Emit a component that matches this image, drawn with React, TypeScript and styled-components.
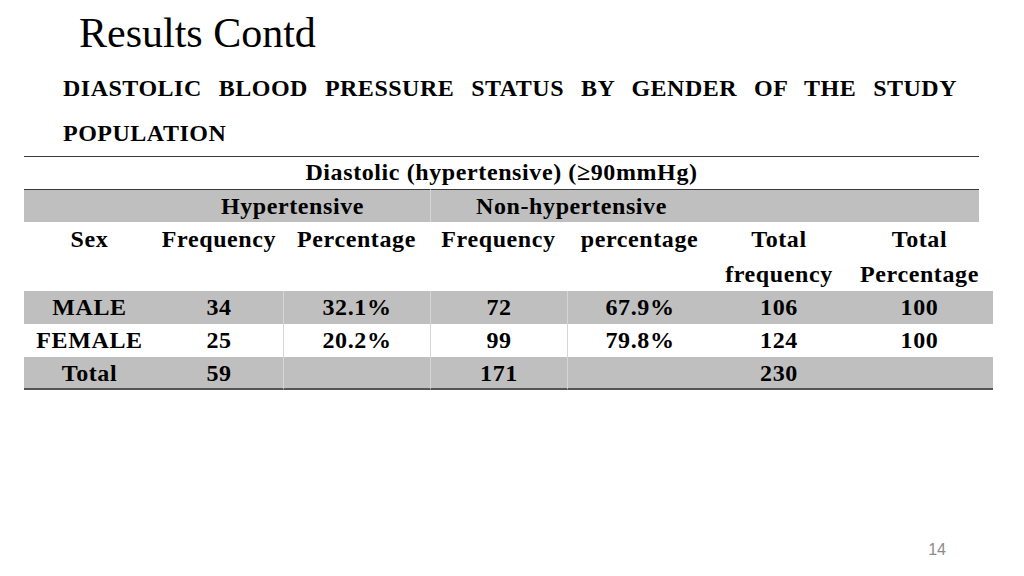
import React from "react";
import styled, { createGlobalStyle } from "styled-components";

const GlobalStyle = createGlobalStyle`
  html, body {
    margin: 0;
    padding: 0;
    background: #ffffff;
  }
  body {
    font-family: "Liberation Serif", "Times New Roman", serif;
    color: #000;
  }
`;

const Slide = styled.div`
  width: 1024px;
  height: 576px;
  display: flex;
  flex-direction: column;
  background: #fff;
  overflow: hidden;
`;

const Title = styled.h1`
  margin: 9px 0 0 0;
  padding-left: 79px;
  font-family: "Liberation Serif", "Times New Roman", serif;
  font-weight: 400;
  font-size: 42px;
  line-height: 48px;
  color: #000;
`;

const Subtitle = styled.p`
  margin: 9px 0 0 63px;
  width: 894px;
  font-family: "Liberation Serif", "Times New Roman", serif;
  font-weight: 700;
  font-size: 24px;
  letter-spacing: 0.5px;
  line-height: 45px;
  text-align: justify;
  text-align-last: left;
`;

const Table = styled.div`
  margin-left: 24px;
  display: grid;
  grid-template-columns: 131px 128px 147px 137px 145px 134px 147px;
  font-family: "Liberation Serif", "Times New Roman", serif;
  font-weight: 700;
  font-size: 24px;
  letter-spacing: 0.6px;
`;

type CellProps = {
  $span?: string;
  $shade?: boolean;
  $divider?: boolean;
  $topRule?: boolean;
  $bottomRule?: boolean;
  $short?: boolean;
  $h?: number;
  $lh?: number;
};

const Cell = styled.div<CellProps>`
  grid-column: ${(p) => p.$span ?? "auto"};
  height: ${(p) => p.$h ?? 33}px;
  line-height: ${(p) => p.$lh ?? 33}px;
  text-align: center;
  white-space: normal;
  background: ${(p) => (p.$shade ? "#bfbfbf" : "#ffffff")};
  border-left: ${(p) => (p.$divider ? "1px solid #d6d6d6" : "none")};
  border-top: ${(p) => (p.$topRule ? "1.5px solid #3a3a3a" : "none")};
  border-bottom: ${(p) => (p.$bottomRule ? "2px solid #555555" : "none")};
  margin-right: ${(p) => (p.$short ? "14px" : "0")};
  box-sizing: border-box;
`;

const Footer = styled.div`
  margin-top: auto;
  padding: 0 78px 16px 0;
  text-align: right;
  font-family: "Liberation Sans", Arial, sans-serif;
  font-size: 16px;
  line-height: 20px;
  color: #8b8b8b;
`;

type Row = { sex: string; hf: string; hp: string; nf: string; np: string; tf: string; tp: string };

const rows: Row[] = [
  { sex: "MALE", hf: "34", hp: "32.1%", nf: "72", np: "67.9%", tf: "106", tp: "100" },
  { sex: "FEMALE", hf: "25", hp: "20.2%", nf: "99", np: "79.8%", tf: "124", tp: "100" },
  { sex: "Total", hf: "59", hp: "", nf: "171", np: "", tf: "230", tp: "" },
];

export default function App() {
  return (
    <>
      <GlobalStyle />
      <Slide>
        <Title>Results Contd</Title>
        <Subtitle>
          DIASTOLIC BLOOD PRESSURE STATUS BY GENDER OF THE STUDY POPULATION
        </Subtitle>
        <Table>
          <Cell $span="1 / -1" $short $topRule $h={33} $lh={31}>
            Diastolic (hypertensive) (≥90mmHg)
          </Cell>

          <Cell $shade $topRule />
          <Cell $span="2 / 4" $shade $topRule>Hypertensive</Cell>
          <Cell $span="4 / 6" $shade $topRule $divider>Non-hypertensive</Cell>
          <Cell $span="6 / 8" $shade $topRule $short />

          <Cell $h={69} $lh={34.5}>Sex</Cell>
          <Cell $h={69} $lh={34.5}>Frequency</Cell>
          <Cell $h={69} $lh={34.5}>Percentage</Cell>
          <Cell $h={69} $lh={34.5}>Frequency</Cell>
          <Cell $h={69} $lh={34.5}>percentage</Cell>
          <Cell $h={69} $lh={34.5}>Total frequency</Cell>
          <Cell $h={69} $lh={34.5}>Total Percentage</Cell>

          {rows.map((r, i) => {
            const shade = i % 2 === 0;
            const last = i === rows.length - 1;
            return (
              <React.Fragment key={r.sex}>
                <Cell $shade={shade} $bottomRule={last}>{r.sex}</Cell>
                <Cell $shade={shade} $bottomRule={last}>{r.hf}</Cell>
                <Cell $shade={shade} $bottomRule={last} $divider>{r.hp}</Cell>
                <Cell $shade={shade} $bottomRule={last} $divider>{r.nf}</Cell>
                <Cell $shade={shade} $bottomRule={last} $divider>{r.np}</Cell>
                <Cell $shade={shade} $bottomRule={last}>{r.tf}</Cell>
                <Cell $shade={shade} $bottomRule={last}>{r.tp}</Cell>
              </React.Fragment>
            );
          })}
        </Table>
        <Footer>14</Footer>
      </Slide>
    </>
  );
}
